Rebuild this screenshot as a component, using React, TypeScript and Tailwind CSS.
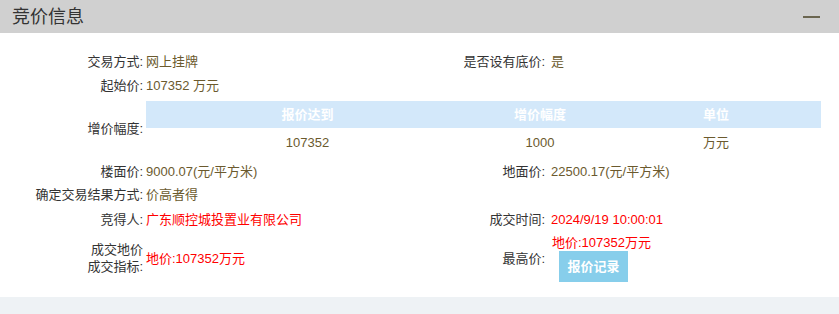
const font = { fontFamily: '"Liberation Sans", "Noto Sans CJK SC", sans-serif' };

function Label({ children }: { children: React.ReactNode }) {
  return <div className="text-right text-[#333]">{children}</div>;
}

function Val({ children, red, right }: { children: React.ReactNode; red?: boolean; right?: boolean }) {
  return (
    <div className={`${right ? "pl-[6px]" : "pl-[3px]"} ${red ? "text-[#ff0000]" : "text-[#6b5a2e]"}`}>
      {children}
    </div>
  );
}

export default function App() {
  return (
    <div className="w-[839px] h-[314px] bg-white text-[13px] leading-[17px]" style={font}>
      <div className="h-[33px] bg-[#d0d0d0] flex items-center justify-between pl-[12px] pr-[19px]">
        <h2 className="text-[18px] text-[#333] leading-none">竞价信息</h2>
        <div className="w-[17px] h-[2px] bg-[#6b6650]" />
      </div>

      <div className="pt-[16px] pb-[13px]">
        <div className="grid grid-cols-[143px_303px_99px_276px] items-center">
          <div className="contents [&>div]:h-[24px] [&>div]:flex [&>div]:items-center">
            <div className="justify-end"><Label>交易方式:</Label></div>
            <div><Val>网上挂牌</Val></div>
            <div className="justify-end"><Label>是否设有底价:</Label></div>
            <div><Val right>是</Val></div>
          </div>

          <div className="contents [&>div]:h-[24px] [&>div]:flex [&>div]:items-center">
            <div className="justify-end"><Label>起始价:</Label></div>
            <div className="col-span-3"><Val>107352 万元</Val></div>
          </div>

          <div className="flex justify-end items-center h-[62px]"><Label>增价幅度:</Label></div>
          <div className="col-span-3 pl-[3px] pt-[4px] pb-[3px]">
            <table className="w-[675px] table-fixed border-collapse text-center">
              <colgroup>
                <col className="w-[323px]" />
                <col className="w-[142px]" />
                <col className="w-[210px]" />
              </colgroup>
              <thead>
                <tr className="h-[27px] bg-[#d3e8fa] text-white font-bold">
                  <th>报价达到</th>
                  <th>增价幅度</th>
                  <th>单位</th>
                </tr>
              </thead>
              <tbody>
                <tr className="h-[28px] text-[#6b5a2e]">
                  <td>107352</td>
                  <td>1000</td>
                  <td>万元</td>
                </tr>
              </tbody>
            </table>
          </div>

          <div className="contents [&>div]:h-[24px] [&>div]:flex [&>div]:items-center">
            <div className="justify-end"><Label>楼面价:</Label></div>
            <div><Val>9000.07(元/平方米)</Val></div>
            <div className="justify-end"><Label>地面价:</Label></div>
            <div><Val right>22500.17(元/平方米)</Val></div>
          </div>

          <div className="contents [&>div]:h-[23px] [&>div]:flex [&>div]:items-center">
            <div className="justify-end"><Label>确定交易结果方式:</Label></div>
            <div className="col-span-3"><Val>价高者得</Val></div>
          </div>

          <div className="contents [&>div]:h-[26px] [&>div]:flex [&>div]:items-center">
            <div className="justify-end"><Label>竞得人:</Label></div>
            <div><Val red>广东顺控城投置业有限公司</Val></div>
            <div className="justify-end"><Label>成交时间:</Label></div>
            <div><Val red right>2024/9/19 10:00:01</Val></div>
          </div>

          <div className="contents [&>div]:h-[52px] [&>div]:flex [&>div]:items-center">
            <div className="justify-end">
              <Label>
                成交地价
                <br />
                成交指标:
              </Label>
            </div>
            <div><Val red>地价:107352万元</Val></div>
            <div className="justify-end"><Label>最高价:</Label></div>
            <div>
              <div className="pl-[7px]">
                <div className="text-[#ff0000]">地价:107352万元</div>
                <button className="ml-[7px] w-[69px] h-[31px] bg-[#87ceeb] text-white font-bold text-[13px]">
                  报价记录
                </button>
              </div>
            </div>
          </div>
        </div>
      </div>
      <div className="h-[17px] bg-[#eef2f5]" />
    </div>
  );
}
